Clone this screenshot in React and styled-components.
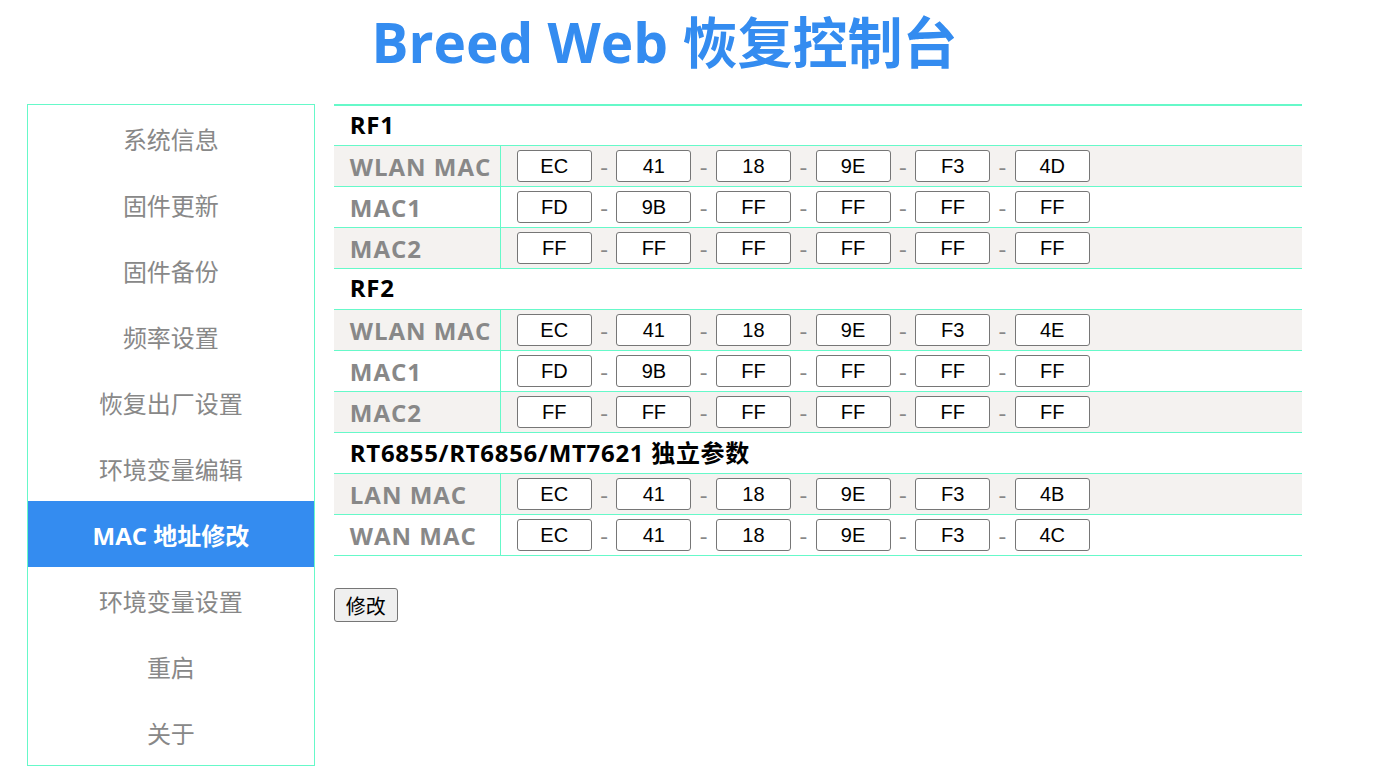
import React from "react";
import styled, { createGlobalStyle } from "styled-components";

const GlobalStyle = createGlobalStyle`
  body {
    margin: 0;
    background: #fff;
    font-family: "Open Sans", "Noto Sans CJK SC", sans-serif;
  }
`;

const LINE = "#66f9c9";

const Page = styled.div`
  width: 1275px;
  padding: 2px 0 0 27px;
`;

const Title = styled.h1`
  margin: 0 0 22px;
  height: 80px;
  line-height: 80px;
  text-align: center;
  font-size: 55px;
  font-weight: 700;
  color: #348cf0;
`;

const Main = styled.div`
  display: flex;
  align-items: flex-start;
  gap: 19px;
`;

const SideBar = styled.ul`
  list-style: none;
  margin: 0;
  padding: 0;
  width: 288px;
  box-sizing: border-box;
  border: 1px solid ${LINE};
`;

const SideItem = styled.li`
  height: 66px;
  display: flex;
  align-items: center;
  justify-content: center;
  font-size: 24px;
  font-weight: ${(p) => (p.$active ? 700 : 400)};
  color: ${(p) => (p.$active ? "#fff" : "#888")};
  background: ${(p) => (p.$active ? "#348cf0" : "transparent")};
`;

const Content = styled.div`
  width: 969px;
`;

const Table = styled.div`
  border-top: 2px solid ${LINE};
`;

const SectionRow = styled.div`
  height: ${(p) => (p.$first ? 36 : 37)}px;
  display: flex;
  align-items: center;
  padding: 0 0 3px 16px;
  border-bottom: 1px solid ${LINE};
  font-size: 24px;
  letter-spacing: 0.7px;
  font-weight: 700;
  color: #000;
`;

const MacRow = styled.div`
  height: 40px;
  display: grid;
  grid-template-columns: 167px 1fr;
  border-bottom: 1px solid ${LINE};
  background: ${(p) => (p.$shaded ? "#f4f2f0" : "#fff")};
`;

const Label = styled.div`
  display: flex;
  align-items: center;
  padding-left: 16px;
  border-right: 1px solid ${LINE};
  font-size: 24px;
  letter-spacing: 1px;
  font-weight: 700;
  color: #888;
`;

const Fields = styled.div`
  display: flex;
  align-items: center;
  padding-left: 16px;
`;

const Octet = styled.input`
  width: 75px;
  height: 32px;
  flex: none;
  box-sizing: border-box;
  border: 1px solid #767676;
  border-radius: 3px;
  background: #fff;
  text-align: center;
  font-family: "Liberation Sans", Arial, sans-serif;
  font-size: 20px;
  color: #000;
  padding: 0;
  outline: none;
`;

const Dash = styled.span`
  width: 24.6px;
  flex: none;
  text-align: center;
  font-size: 24px;
  color: #888;
`;

const SubmitButton = styled.button`
  margin-top: 32px;
  height: 34px;
  padding: 0 11px;
  font-family: "Noto Sans CJK SC", sans-serif;
  font-size: 20px;
  color: #000;
  background: #efefef;
  border: 1px solid #767676;
  border-radius: 3px;
`;

const menu = [
  "系统信息",
  "固件更新",
  "固件备份",
  "频率设置",
  "恢复出厂设置",
  "环境变量编辑",
  "MAC 地址修改",
  "环境变量设置",
  "重启",
  "关于",
];

const FF = ["FF", "FF", "FF", "FF", "FF", "FF"];
const MAC1 = ["FD", "9B", "FF", "FF", "FF", "FF"];

const sections = [
  {
    title: "RF1",
    rows: [
      { label: "WLAN MAC", value: ["EC", "41", "18", "9E", "F3", "4D"] },
      { label: "MAC1", value: MAC1 },
      { label: "MAC2", value: FF },
    ],
  },
  {
    title: "RF2",
    rows: [
      { label: "WLAN MAC", value: ["EC", "41", "18", "9E", "F3", "4E"] },
      { label: "MAC1", value: MAC1 },
      { label: "MAC2", value: FF },
    ],
  },
  {
    title: "RT6855/RT6856/MT7621 独立参数",
    rows: [
      { label: "LAN MAC", value: ["EC", "41", "18", "9E", "F3", "4B"] },
      { label: "WAN MAC", value: ["EC", "41", "18", "9E", "F3", "4C"] },
    ],
  },
];

const App = () => {
  return (
    <Page>
      <GlobalStyle />
      <Title>Breed Web 恢复控制台</Title>
      <Main>
        <SideBar>
          {menu.map((item) => (
            <SideItem key={item} $active={item === "MAC 地址修改"}>
              {item}
            </SideItem>
          ))}
        </SideBar>
        <Content>
          <Table>
            {sections.map((section, s) => (
              <React.Fragment key={section.title}>
                <SectionRow $first={s === 0}>{section.title}</SectionRow>
                {section.rows.map((row, i) => (
                  <MacRow key={row.label} $shaded={i % 2 === 0}>
                    <Label>{row.label}</Label>
                    <Fields>
                      {row.value.map((v, j) => (
                        <React.Fragment key={j}>
                          {j > 0 && <Dash>-</Dash>}
                          <Octet value={v} readOnly />
                        </React.Fragment>
                      ))}
                    </Fields>
                  </MacRow>
                ))}
              </React.Fragment>
            ))}
          </Table>
          <SubmitButton>修改</SubmitButton>
        </Content>
      </Main>
    </Page>
  );
};

export default App;
